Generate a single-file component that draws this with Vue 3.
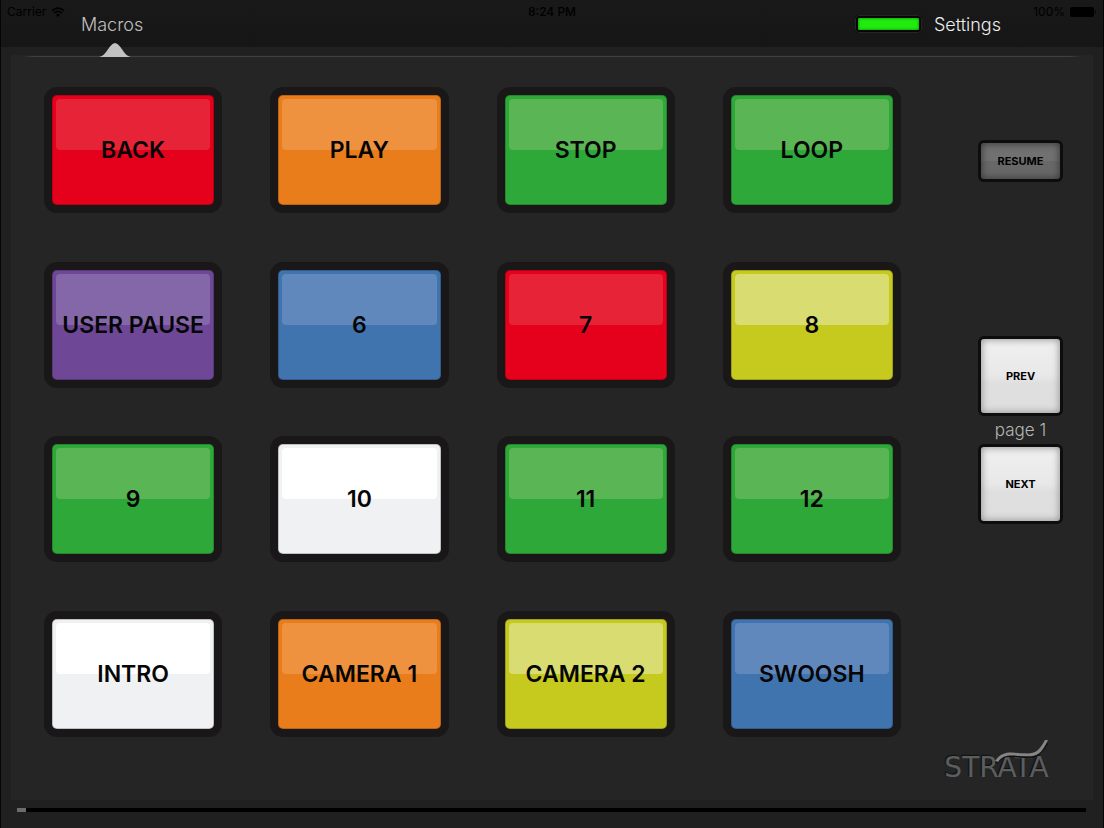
<script setup>
import { ref } from 'vue'

const page = ref(1)
const position = ref(0)
const pads = [
  { label: 'BACK', color: 'red' },
  { label: 'PLAY', color: 'orange' },
  { label: 'STOP', color: 'green' },
  { label: 'LOOP', color: 'green' },
  { label: 'USER PAUSE', color: 'purple' },
  { label: '6', color: 'blue' },
  { label: '7', color: 'red' },
  { label: '8', color: 'yellow' },
  { label: '9', color: 'green' },
  { label: '10', color: 'white' },
  { label: '11', color: 'green' },
  { label: '12', color: 'green' },
  { label: 'INTRO', color: 'white' },
  { label: 'CAMERA 1', color: 'orange' },
  { label: 'CAMERA 2', color: 'yellow' },
  { label: 'SWOOSH', color: 'blue' },
]
</script>

<template>
  <div class="app">
    <header class="top">
      <div class="status">
        <span class="carrier">
          Carrier
          <svg width="14" height="10" viewBox="0 0 14 10" aria-hidden="true">
            <path d="M1 3.7Q7-1.3 13 3.7M3.1 6Q7 2.7 10.9 6" fill="none" stroke="#000" stroke-width="1.6" />
            <path d="M4.9 7.7Q7 6 9.1 7.7L7 9.9Z" />
          </svg>
        </span>
        <span class="clock">8:24 PM</span>
        <span class="power">
          100%
          <svg width="27" height="10" viewBox="0 0 27 10" aria-hidden="true">
            <rect width="24" height="10" rx="2" />
            <path d="M25 3Q27 5 25 7Z" />
          </svg>
        </span>
      </div>
      <nav class="nav">
        <a class="tab" href="#macros" aria-current="page">
          Macros
          <svg class="pointer" width="32" height="15" viewBox="0 0 32 15" aria-hidden="true">
            <path d="M0 15C5 14 7 10 11 4.500Q16-2.500 21 4.500C25 10 27 14 32 15Z" />
          </svg>
        </a>
        <span class="led"></span>
        <a class="settings" href="#settings">Settings</a>
      </nav>
    </header>

    <main class="panel">
      <section class="grid">
        <button v-for="pad in pads" :key="pad.label" type="button" class="pad">
          <span class="face" :class="pad.color"><span class="label">{{ pad.label }}</span></span>
        </button>
      </section>
      <aside class="side">
        <button type="button" class="key resume">RESUME</button>
        <div class="pager">
          <button type="button" class="key page-key" @click="page = Math.max(1, page - 1)">PREV</button>
          <span class="page">page {{ page }}</span>
          <button type="button" class="key page-key" @click="page++">NEXT</button>
        </div>
        <div class="logo">
          <span>STRATA</span>
          <svg class="swoosh" width="56" height="26" viewBox="0 0 56 26" aria-hidden="true">
            <path d="M2 24C9 15 15 16 24 17C41 19 44 18 53 4" fill="none" stroke="#111" stroke-width="3" />
            <path d="M1 22C7 13 15 13 24 14C41 15 43 15 51 1L54 1C46 18 42 18 25 17C15 16 9 16 4 23Z" fill="#858585" />
          </svg>
        </div>
      </aside>
    </main>

    <footer class="bottom">
      <input v-model="position" class="track" type="range" min="0" max="100" aria-label="Position" />
    </footer>
  </div>
</template>

<style>
body {
  margin: 0;
  background: #202020;
}
</style>

<style scoped>
.app {
  display: flex;
  flex-direction: column;
  box-sizing: border-box;
  min-height: 100vh;
  border: solid #050505;
  border-width: 0 1px;
  background: #202020;
  font-family: Inter, "Liberation Sans", sans-serif;
}
.app * {
  box-sizing: border-box;
}
.top {
  position: relative;
  height: 47px;
  background: linear-gradient(#191919, #161616);
}
.status {
  position: absolute;
  inset: 3px 6px auto;
  display: grid;
  grid-template-columns: 1fr auto 1fr;
  font-size: 12px;
  line-height: 17px;
  color: #000;
}
.status span {
  display: flex;
  align-items: center;
  gap: 5px;
}
.clock {
  font-weight: 500;
}
.power {
  justify-content: flex-end;
}
.nav {
  display: flex;
  align-items: center;
  height: 48px;
  padding: 0 102px 0 80px;
  font-size: 18px;
  font-weight: 300;
}
.nav a {
  text-decoration: none;
}
.tab {
  position: relative;
  margin-right: auto;
  color: #c0c0c0;
}
.pointer {
  position: absolute;
  left: 18px;
  top: 28px;
  fill: #c2c2c2;
}
.led {
  width: 67px;
  height: 18px;
  margin-right: 12px;
  border: 3px solid #050505;
  outline: 1px solid #252525;
  outline-offset: -1px;
  border-radius: 4px;
  background: #20ea0e;
  box-shadow: inset 0 0 3px #087a02;
}
.settings {
  color: #eee;
}
.panel {
  flex: 1;
  display: flex;
  justify-content: space-between;
  gap: 24px;
  margin: 8px 10px 0;
  padding: 32px 25px 16px 33px;
  background:
    linear-gradient(90deg, transparent, #404040 1%, #404040 99%, transparent) 12px 1px / calc(100% - 24px) 1px no-repeat,
    #252525;
}
.grid {
  flex: 0 1 857px;
  display: grid;
  grid-template-columns: repeat(4, minmax(0, 1fr));
  column-gap: 48px;
  align-content: space-between;
  margin-bottom: 47px;
}
.pad {
  height: 126px;
  padding: 8px;
  border: 0;
  border-radius: 13px;
  background: #1a1718;
  font: inherit;
}
.face {
  position: relative;
  display: flex;
  align-items: center;
  justify-content: center;
  height: 100%;
  border: 1px solid rgb(0 0 0 / 20%);
  border-radius: 5px;
  background: var(--base);
  font-size: 23px;
  font-weight: 600;
  color: #060606;
  white-space: nowrap;
}
.face::before {
  content: "";
  position: absolute;
  inset: 3px 3px auto;
  height: 51px;
  border-radius: 4px;
  background: var(--gloss);
}
.label {
  position: relative;
}
.red { --base: #e5001b; --gloss: #e72437; }
.orange { --base: #e97d1c; --gloss: #ee923f; }
.green { --base: #2da839; --gloss: #5ab555; }
.purple { --base: #6e4897; --gloss: #8467a9; }
.blue { --base: #4074ae; --gloss: #6188bd; }
.yellow { --base: #c6c91e; --gloss: #d9dc70; }
.white { --base: #f0f1f3; --gloss: #fff; }
.side {
  display: flex;
  flex-direction: column;
  align-items: flex-end;
  padding-top: 53px;
}
.key {
  width: 85px;
  margin-right: 5px;
  border: 3px solid #0d0d0d;
  border-radius: 6px;
  font: 700 11px Inter, "Liberation Sans", sans-serif;
  color: #000;
}
.resume {
  height: 42px;
  background: linear-gradient(#717171 50%, #686868 50%);
  box-shadow: inset 0 0 7px 1px #3c3c3c;
}
.pager {
  display: flex;
  flex-direction: column;
  margin-top: 154px;
}
.page-key {
  height: 80px;
  background: linear-gradient(#f0f0f0, #e8e8e8 50%, #dfdfdf 60%, #dedede);
  box-shadow: inset 0 0 7px 1px #999;
}
.page {
  margin-right: 5px;
  font-size: 17px;
  font-weight: 300;
  line-height: 28px;
  text-align: center;
  color: #b5b5b5;
}
.logo {
  position: relative;
  width: 143px;
  margin-top: auto;
  font: 28px/32px "DejaVu Sans", sans-serif;
  color: #5c5e5e;
  text-shadow: -1px -1px 1px #111;
  text-align: center;
}
.swoosh {
  position: absolute;
  left: 69px;
  top: -13px;
}
.bottom {
  display: flex;
  padding: 8px 17px 16px 16px;
}
.track {
  appearance: none;
  width: 100%;
  height: 4px;
  margin: 0;
  background: #000;
}
.track::-webkit-slider-thumb {
  appearance: none;
  width: 9px;
  height: 4px;
  background: #6c6c6c;
}
</style>
